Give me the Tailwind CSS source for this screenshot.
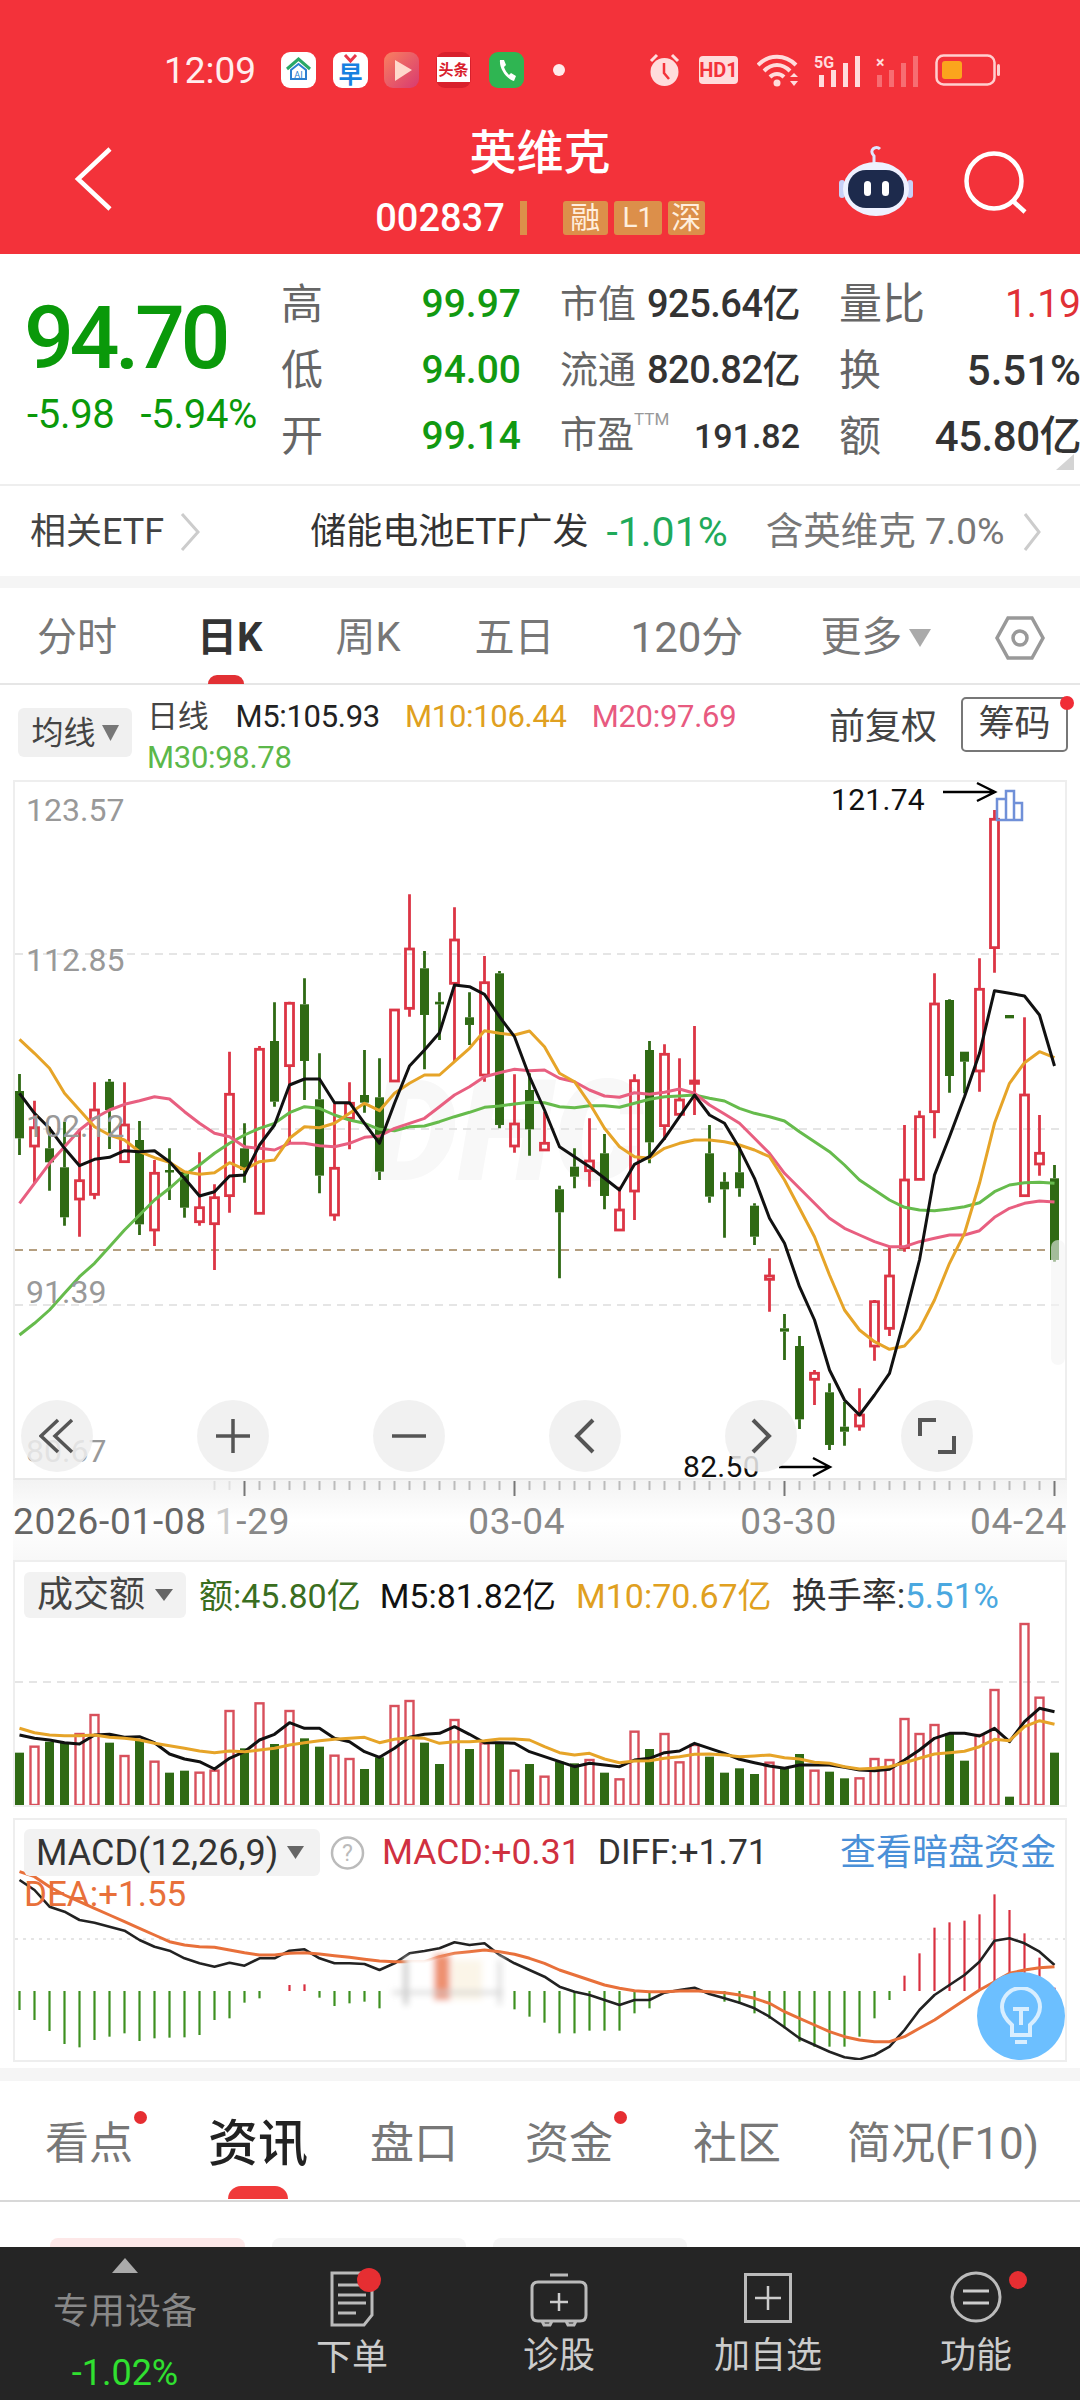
<!DOCTYPE html>
<html lang="zh">
<head>
<meta charset="UTF-8" />
<title>英维克 K线</title>
<script src="https://cdn.jsdelivr.net/npm/@tailwindcss/browser@4"></script>
</head>
<body class="bg-white">
<div class="w-[1080px] h-[2400px] overflow-hidden flex flex-col font-['Roboto','Noto_Sans_CJK_SC',sans-serif] text-[#333]">

  <!-- red header -->
  <header class="bg-[#f3323a] h-[254px] shrink-0 text-white">
    <div class="pt-[52px] pl-[164px] h-[88px] flex items-center">
      <span class="text-[37px] leading-none w-[91px] text-[#ffeeee]">12:09</span>
      <svg class="ml-[26px]" width="35" height="36" viewBox="0 0 35 36"><rect width="35" height="36" rx="9" fill="#fff"/><path d="M6 17 17.5 7 29 17" fill="none" stroke="#2aa866" stroke-width="3"/><path d="M10 18 17.5 12 25 18V27H10Z" fill="none" stroke="#2c7fd0" stroke-width="2"/><text x="17.5" y="26" font-size="9" text-anchor="middle" fill="#2c7fd0">AI</text></svg>
      <svg class="ml-[17px]" width="35" height="36" viewBox="0 0 35 36"><rect width="35" height="36" rx="9" fill="#fff"/><path d="M12 3 17.5 9 23 3" fill="none" stroke="#e8384a" stroke-width="3"/><text x="17.5" y="31" font-size="24" font-weight="700" text-anchor="middle" fill="#1780e0">早</text></svg>
      <svg class="ml-[16px]" width="35" height="36" viewBox="0 0 35 36"><defs><linearGradient id="pg" x1="0" y1="0" x2="1" y2="1"><stop offset="0" stop-color="#f98060"/><stop offset="1" stop-color="#d83a70"/></linearGradient></defs><rect width="35" height="36" rx="9" fill="url(#pg)"/><path d="M11 8 28 18 11 29Z" fill="#ffd8cc"/></svg>
      <svg class="ml-[17px]" width="35" height="36" viewBox="0 0 35 36"><rect width="35" height="36" rx="9" fill="#d8202c"/><rect x="1" y="5" width="33" height="25" fill="#fff"/><text x="17.5" y="23" font-size="15" font-weight="700" text-anchor="middle" fill="#d8202c">头条</text></svg>
      <svg class="ml-[18px]" width="35" height="36" viewBox="0 0 35 36"><rect width="35" height="36" rx="9" fill="#2fb552"/><path d="M11 8C10 16 17 27 25 29L27 24 22 21 20 23C18 21 16 18 15 15L17 13 15 8Z" fill="#fff"/></svg>
      <span class="ml-[29px] w-[12px] h-[12px] rounded-full bg-[#ffeaea]"></span>
      <svg class="ml-[84px]" width="31" height="34" viewBox="0 0 31 34"><path d="M2 8 8 2M29 8 23 2" stroke="#ffdcdc" stroke-width="3"/><circle cx="15.5" cy="19" r="14" fill="#ffdcdc"/><path d="M15 10V20L20 26" fill="none" stroke="#f3323a" stroke-width="2.5"/></svg>
      <span class="ml-[19px] w-[39px] h-[28px] rounded-[4px] bg-[#ffdcdc] text-[#f3323a] text-[20px] leading-[28px] font-bold text-center">HD1</span>
      <svg class="ml-[19px]" width="43" height="34" viewBox="0 0 43 34"><path d="M1 12C12 1 28 1 39 12M7 18C15 10 25 10 33 18M13 24C17 20 23 20 27 24" fill="none" stroke="#ffdcdc" stroke-width="4"/><circle cx="20" cy="30" r="3.5" fill="#ffdcdc"/><path d="M33 24 37 20 41 24ZM33 28H41L37 33Z" fill="#ffdcdc"/></svg>
      <svg class="ml-[14px] overflow-visible" width="48" height="34" viewBox="0 0 48 34"><text x="0" y="15" font-size="16" font-weight="700" fill="#ffdcdc">5G</text><g fill="#ffdcdc"><rect x="5" y="22" width="5" height="12"/><rect x="17" y="17" width="5" height="17"/><rect x="29" y="10" width="5" height="24"/><rect x="41" y="3" width="5" height="31"/></g></svg>
      <svg class="ml-[14px] overflow-visible" width="43" height="34" viewBox="0 0 43 34"><text x="0" y="15" font-size="16" font-weight="700" fill="#ffdcdc">×</text><g fill="#ffdcdc" opacity=".35"><rect x="1" y="22" width="5" height="12"/><rect x="13" y="17" width="5" height="17"/><rect x="25" y="10" width="5" height="24"/><rect x="37" y="3" width="5" height="31"/></g></svg>
      <svg class="ml-[16px]" width="65" height="32" viewBox="0 0 65 32"><rect x="1.5" y="1.5" width="58" height="29" rx="7" fill="none" stroke="#ffcfcf" stroke-width="2.5"/><rect x="7" y="7" width="20" height="18" rx="3" fill="#fba51d"/><rect x="62" y="10" width="3" height="12" rx="1.5" fill="#ffcfcf"/></svg>
    </div>
    <div class="relative h-[166px] pt-[41px] flex flex-col items-center">
      <svg class="absolute left-[74px] top-[58px]" width="40" height="66" viewBox="0 0 40 66"><path d="M36 3 4 33 36 63" fill="none" stroke="#fff" stroke-width="4.5"/></svg>
      <h1 class="text-[47px] leading-none font-medium">英维克</h1>
      <div class="mt-[24px] h-[36px] flex items-center">
        <span class="text-[38px] leading-none font-medium">002837</span>
        <span class="ml-[15px] w-[7px] h-[34px] bg-[#dc8f4a]"></span>
        <span class="ml-[36px] w-[45px] h-[34px] rounded-[3px] bg-[#dc8f4a] text-[#ffeedd] text-[30px] leading-[34px] text-center">融</span>
        <span class="ml-[6px] w-[48px] h-[34px] rounded-[3px] bg-[#dc8f4a] text-[#ffeedd] text-[28px] leading-[34px] text-center">L1</span>
        <span class="ml-[6px] w-[37px] h-[34px] rounded-[3px] bg-[#dc8f4a] text-[#ffeedd] text-[30px] leading-[34px] text-center">深</span>
      </div>
      <svg class="absolute left-[839px] top-[56px]" width="74" height="72" viewBox="0 0 74 72"><path d="M35 22V12C29 6 37 1 41 5" fill="none" stroke="#dfe6ff" stroke-width="3"/><rect x="0" y="36" width="6" height="18" rx="3" fill="#c8d0f6"/><rect x="68" y="36" width="6" height="18" rx="3" fill="#c8d0f6"/><ellipse cx="37" cy="45" rx="33" ry="27" fill="#eef1ff"/><rect x="9" y="26" width="56" height="38" rx="18" fill="#1d2a4c"/><rect x="25" y="37" width="7" height="15" rx="3.5" fill="#fff"/><rect x="43" y="37" width="7" height="15" rx="3.5" fill="#fff"/></svg>
      <svg class="absolute left-[962px] top-[62px]" width="68" height="64" viewBox="0 0 68 64"><circle cx="32" cy="31" r="27.5" fill="none" stroke="#fff" stroke-width="4.5"/><path d="M51 51 63 62" stroke="#fff" stroke-width="4.5"/></svg>
    </div>
  </header>

  <!-- quote -->
  <section class="relative h-[232px] shrink-0 border-b-2 border-[#eeeeee] flex pt-[17px]">
    <div class="pl-[24px] w-[281px] shrink-0">
      <div class="mt-[22px] text-[88px] leading-[90px] font-medium tracking-[-4.5px] text-[#0a990a]">94.70</div>
      <div class="mt-[10px] ml-[3px] flex text-[40px] leading-[44px] tracking-[-0.3px] text-[#0a990a]"><span>-5.98</span><span class="ml-[26px]">-5.94%</span></div>
    </div>
    <div class="grid grid-cols-[240px_240px_242px] auto-rows-[66px] gap-x-[39px] items-center">
      <div class="flex justify-between items-center"><span class="text-[42px] text-[#666]">高</span><span class="text-[39px] font-medium text-[#119911]">99.97</span></div>
      <div class="flex justify-between items-center"><span class="text-[38px] text-[#666]">市值</span><span class="text-[38px] font-medium tracking-[-0.5px]">925.64亿</span></div>
      <div class="flex justify-between items-center"><span class="text-[43px] text-[#666]">量比</span><span class="text-[39px] text-[#e03036]">1.19</span></div>
      <div class="flex justify-between items-center"><span class="text-[42px] text-[#666]">低</span><span class="text-[39px] font-medium text-[#119911]">94.00</span></div>
      <div class="flex justify-between items-center"><span class="text-[38px] text-[#666]">流通</span><span class="text-[38px] font-medium tracking-[-0.5px]">820.82亿</span></div>
      <div class="flex justify-between items-center"><span class="text-[42px] text-[#666]">换</span><span class="text-[42px] font-medium">5.51%</span></div>
      <div class="flex justify-between items-center"><span class="text-[42px] text-[#666]">开</span><span class="text-[39px] font-medium text-[#119911]">99.14</span></div>
      <div class="flex justify-between items-center"><span class="text-[37px] text-[#666] flex items-start">市盈<span class="text-[17px] leading-[22px] text-[#999]">TTM</span></span><span class="text-[34px] font-medium">191.82</span></div>
      <div class="flex justify-between items-center"><span class="text-[42px] text-[#666]">额</span><span class="text-[42px] font-medium tracking-[-0.5px]">45.80亿</span></div>
    </div>
    <svg class="absolute right-[6px] bottom-[14px]" width="18" height="16" viewBox="0 0 18 16"><path d="M18 0V16H0Z" fill="#d4d4d4"/></svg>
  </section>

  <!-- related ETF -->
  <section class="h-[90px] shrink-0 flex items-center pt-[2px] leading-none">
    <span class="ml-[30px] text-[36px] text-[#444]">相关ETF</span>
    <svg class="ml-[16px]" width="21" height="40" viewBox="0 0 21 40"><path d="M2 2 18 20 2 38" fill="none" stroke="#cccccc" stroke-width="3"/></svg>
    <span class="ml-[109px] text-[36px] text-[#333]">储能电池ETF广发</span>
    <span class="ml-[18px] text-[41px] text-[#1faa5a]">-1.01%</span>
    <span class="ml-[38px] text-[37.5px] text-[#777]">含英维克 7.0%</span>
    <svg class="ml-[18px]" width="18" height="40" viewBox="0 0 18 40"><path d="M2 2 16 20 2 38" fill="none" stroke="#cccccc" stroke-width="3"/></svg>
  </section>
  <div class="h-[12px] shrink-0 bg-[#f5f5f5]"></div>

  <!-- period tabs -->
  <nav class="h-[97px] shrink-0 border-b-2 border-[#e6e6e6] pl-[37px] pr-[35px] pt-[4px] flex items-center text-[40px] leading-none text-[#777]">
    <span>分时</span>
    <span class="relative ml-[80px] font-bold text-[#333]">日K<span class="absolute left-[11px] top-[57px] w-[36px] h-[9px] rounded-t-full bg-[#e23034]"></span></span>
    <span class="ml-[73px]">周K</span>
    <span class="ml-[74px]">五日</span>
    <span class="ml-[76px] text-[42px]">120分</span>
    <span class="ml-[77px] flex items-center text-[41px]">更多<svg class="ml-[7px]" width="22" height="18" viewBox="0 0 22 18"><path d="M0 0H22L11 18Z" fill="#aaaaaa"/></svg></span>
    <svg class="ml-auto" width="50" height="46" viewBox="0 0 50 46"><path d="M13 3H37L48 23 37 43H13L2 23Z" fill="none" stroke="#999" stroke-width="3.5"/><circle cx="25" cy="23" r="7" fill="none" stroke="#999" stroke-width="3.5"/></svg>
  </nav>

  <!-- MA legend -->
  <section class="relative h-[95px] shrink-0 flex">
    <div class="ml-[18px] mt-[23px] w-[114px] h-[49px] rounded-[6px] bg-[#f0f0f0] flex items-center justify-center text-[32px] leading-none text-[#444]">均线<svg class="ml-[6px]" width="17" height="16" viewBox="0 0 17 16"><path d="M0 0H17L8.5 16Z" fill="#777"/></svg></div>
    <div class="ml-[15px] mt-[11px] w-[600px] text-[31px] leading-[41px] tracking-[-0.3px]">
      <div class="flex"><span class="text-[#444]">日线</span><span class="ml-[27px] text-[#222]">M5:105.93</span><span class="ml-[25px] text-[#e0a020]">M10:106.44</span><span class="ml-[25px] text-[#e85a80]">M20:97.69</span></div>
      <div class="text-[#5cb84a]">M30:98.78</div>
    </div>
    <span class="absolute left-[829px] top-[22px] text-[36px] leading-[40px] text-[#444]">前复权</span>
    <span class="absolute left-[961px] top-[12px] w-[107px] h-[55px] border-2 border-[#777] rounded-[5px] text-[36px] leading-[51px] text-center text-[#444]">筹码</span>
    <span class="absolute left-[1060px] top-[11px] w-[14px] h-[14px] rounded-full bg-[#f02c36]"></span>
  </section>

  <!-- candle chart -->
  <div class="relative mx-[13px] h-[700px] shrink-0 border-2 border-[#eeeeee] border-b-[#e8e8e8]">
    <svg id="kline" class="block w-full h-full overflow-visible" viewBox="15 782 1050 696">
      <text x="370" y="1180" font-size="140" font-weight="900" font-style="italic" fill="#f8f8f8">DHC</text>
      <g stroke="#dddddd" stroke-width="1.5" stroke-dasharray="8 6"><path d="M15 954H1065M15 1129H1065M15 1305H1065"/></g>
      <path d="M15 1250H1065" stroke="#b59f80" stroke-width="2" stroke-dasharray="8 6"/>
    </svg>
    <div class="absolute left-[6px] top-[618px] flex gap-[104px]">
      <div class="w-[72px] h-[72px] rounded-full bg-[#eeeeee]/85 flex items-center justify-center"><svg width="36" height="36" viewBox="0 0 36 36"><path d="M19 2 2 18 19 34M33 2 16 18 33 34" fill="none" stroke="#555" stroke-width="3.5"/></svg></div>
      <div class="w-[72px] h-[72px] rounded-full bg-[#eeeeee]/85 flex items-center justify-center"><svg width="34" height="34" viewBox="0 0 34 34"><path d="M0 17H34M17 0V34" stroke="#555" stroke-width="3.5"/></svg></div>
      <div class="w-[72px] h-[72px] rounded-full bg-[#eeeeee]/85 flex items-center justify-center"><svg width="34" height="6" viewBox="0 0 34 6"><path d="M0 3H34" stroke="#555" stroke-width="3.5"/></svg></div>
      <div class="w-[72px] h-[72px] rounded-full bg-[#eeeeee]/85 flex items-center justify-center"><svg width="22" height="36" viewBox="0 0 22 36"><path d="M19 2 3 18 19 34" fill="none" stroke="#555" stroke-width="4"/></svg></div>
      <div class="w-[72px] h-[72px] rounded-full bg-[#eeeeee]/85 flex items-center justify-center"><svg width="22" height="36" viewBox="0 0 22 36"><path d="M3 2 19 18 3 34" fill="none" stroke="#555" stroke-width="4"/></svg></div>
      <div class="w-[72px] h-[72px] rounded-full bg-[#eeeeee]/85 flex items-center justify-center"><svg width="38" height="36" viewBox="0 0 38 36"><path d="M2 18V2H18M36 18V34H20" fill="none" stroke="#555" stroke-width="4"/></svg></div>
    </div>
    <div class="absolute right-0 top-[458px] w-[14px] h-[125px] rounded-full bg-[#f4f4f4]/60"></div>
  </div>

  <!-- date axis -->
  <div class="relative h-[80px] shrink-0 mx-[13px] bg-linear-to-b from-[#f3f3f3] via-white via-50% to-[#f8f8f8]">
    <svg id="ticks" class="absolute left-0 top-0" width="1054" height="20" viewBox="13 1480 1054 20"></svg>
    <div class="absolute inset-x-0 top-[21px] h-[40px] flex items-center text-[37px] leading-none tracking-[0.7px] text-[#888]">
      <span class="text-[#666]">2026-01-08</span>
      <span class="ml-[8px]"><span class="text-[#ccc]">1</span>-29</span>
      <span class="ml-[178px]">03-04</span>
      <span class="ml-[175px]">03-30</span>
      <span class="ml-auto">04-24</span>
    </div>
  </div>

  <!-- turnover -->
  <div class="relative mx-[13px] h-[247px] shrink-0 border-2 border-[#eeeeee] overflow-hidden">
    <svg id="vol" class="block w-full h-full" viewBox="15 1562 1050 243">
      <path d="M15 1682H1065" stroke="#dddddd" stroke-width="1.5" stroke-dasharray="8 6"/>
    </svg>
    <div class="absolute left-[9px] top-[10px] flex items-center text-[34px] leading-none">
      <div class="w-[162px] h-[46px] rounded-[6px] bg-[#f2f2f2] flex items-center justify-center text-[36px] text-[#444]">成交额<svg class="ml-[10px]" width="18" height="12" viewBox="0 0 18 12"><path d="M0 0H18L9 12Z" fill="#666"/></svg></div>
      <span class="ml-[13px] pt-[2px] text-[#3a6e20]">额:45.80亿</span>
      <span class="ml-[19px] pt-[2px] text-[#111]">M5:81.82亿</span>
      <span class="ml-[20px] pt-[2px] text-[#e0a020]">M10:70.67亿</span>
      <span class="ml-[20px] pt-[2px] text-[35px] text-[#333]">换手率:<span class="text-[#4aa8e0]">5.51%</span></span>
    </div>
  </div>
  <div class="h-[11px] shrink-0"></div>

  <!-- MACD -->
  <div class="relative mx-[13px] h-[244px] shrink-0 border-2 border-[#eeeeee] overflow-hidden">
    <svg id="macd" class="block w-full h-full" viewBox="15 1820 1050 240">
      <defs><filter id="soft"><feGaussianBlur stdDeviation="3"/></filter></defs>
      <path d="M15 1939H1065" stroke="#dddddd" stroke-width="1.5" stroke-dasharray="3 5"/>
    </svg>
    <div class="absolute left-[9px] top-[9px] flex items-center text-[35.5px] leading-none">
      <div class="w-[296px] h-[47px] rounded-[6px] bg-[#f2f2f2] flex items-center pl-[12px] text-[36px] text-[#333]">MACD(12,26,9)<svg class="ml-[9px]" width="17" height="13" viewBox="0 0 17 13"><path d="M0 0H17L8.5 13Z" fill="#666"/></svg></div>
      <svg class="ml-[10px]" width="35" height="36" viewBox="0 0 35 36"><circle cx="17.5" cy="18" r="15.5" fill="none" stroke="#bbbbbb" stroke-width="2.5"/><text x="17.5" y="26" font-size="23" text-anchor="middle" fill="#bbbbbb">?</text></svg>
      <span class="ml-[17px] text-[#d03040]">MACD:+0.31</span>
      <span class="ml-[17px] text-[#333]">DIFF:+1.71</span>
      <span class="absolute left-[816px] w-[216px] text-[36px] text-[#4a90d8] whitespace-nowrap">查看暗盘资金</span>
    </div>
    <span class="absolute left-[9px] top-[55px] text-[35px] leading-[40px] text-[#e8703a]">DEA:+1.55</span>
    <div class="absolute left-[962px] top-[152px] w-[88px] h-[88px] rounded-full bg-[#6cbfff] flex items-center justify-center">
      <svg width="42" height="58" viewBox="0 0 42 58"><path d="M12 38C4 31 2 25 2 20A19 19 0 0 1 40 20C40 25 38 31 30 38V48H12Z" fill="none" stroke="#d8eeff" stroke-width="4"/><path d="M13 22H29M21 22V38M15 55H27" fill="none" stroke="#d8eeff" stroke-width="4"/></svg>
    </div>
  </div>
  <div class="h-[6px] shrink-0"></div>
  <div class="h-[13px] shrink-0 bg-[#f5f5f5]"></div>

  <!-- lower tabs -->
  <nav class="relative h-[121px] shrink-0 border-b-2 border-[#d8d8d8] pl-[45px] pt-[6px] flex items-center text-[44px] leading-none text-[#777]">
    <span class="relative">看点<span class="absolute -right-[14px] -top-[11px] w-[13px] h-[13px] rounded-full bg-[#e62e32]"></span></span>
    <span class="relative ml-[75px] text-[50px] font-medium text-[#222]">资讯<span class="absolute left-[20px] top-[67px] w-[60px] h-[13px] rounded-t-full rounded-b-[3px] bg-[#f03a3a]"></span></span>
    <span class="ml-[62px]">盘口</span>
    <span class="relative ml-[67px]">资金<span class="absolute -right-[14px] -top-[11px] w-[13px] h-[13px] rounded-full bg-[#e62e32]"></span></span>
    <span class="ml-[80px]">社区</span>
    <span class="ml-[66px]">简况(F10)</span>
  </nav>
  <div class="h-[45px] shrink-0 flex items-end pl-[50px] gap-[27px]">
    <div class="w-[195px] h-[9px] rounded-t-[8px] bg-[#fde8e8]"></div>
    <div class="w-[194px] h-[9px] rounded-t-[8px] bg-[#f5f5f5]"></div>
    <div class="w-[194px] h-[9px] rounded-t-[8px] bg-[#f5f5f5]"></div>
  </div>

  <!-- bottom bar -->
  <footer class="h-[153px] shrink-0 bg-[#252525] grid grid-cols-[250px_204px_210px_208px_208px] text-[36px] leading-none text-[#cccccc]">
    <div class="flex flex-col items-center pt-[11px]">
      <svg width="26" height="15" viewBox="0 0 26 15"><path d="M13 0 26 15H0Z" fill="#aaaaaa"/></svg>
      <span class="mt-[21px] text-[#888]">专用设备</span>
      <span class="mt-[25px] text-[36px] text-[#30e030]">-1.02%</span>
    </div>
    <div class="relative flex flex-col items-center pt-[24px]">
      <svg width="52" height="56" viewBox="0 0 52 56"><path d="M6 2H46V44L38 54H6Z" fill="none" stroke="#bbbbbb" stroke-width="3"/><path d="M12 14H36M12 24H40M12 32H40M12 42H30" stroke="#bbbbbb" stroke-width="3"/></svg>
      <span class="mt-[13px]">下单</span>
      <span class="absolute left-[107px] top-[21px] w-[24px] h-[24px] rounded-full bg-[#e62e32]"></span>
    </div>
    <div class="flex flex-col items-center pt-[26px]">
      <svg width="58" height="54" viewBox="0 0 58 54"><path d="M20 2H38M8 9H50Q56 9 56 15V42Q56 48 50 48H8Q2 48 2 42V15Q2 9 8 9ZM12 48 14 52H20L22 48M36 48 38 52H44L46 48" fill="none" stroke="#bbbbbb" stroke-width="3"/><path d="M29 20V38M20 29H38" stroke="#cccccc" stroke-width="2.5"/></svg>
      <span class="mt-[11px]">诊股</span>
    </div>
    <div class="flex flex-col items-center pt-[26px]">
      <svg width="48" height="50" viewBox="0 0 48 50"><rect x="1.5" y="1.5" width="45" height="47" fill="none" stroke="#bbbbbb" stroke-width="3"/><path d="M24 13V37M11 25H37" stroke="#cccccc" stroke-width="2.5"/></svg>
      <span class="mt-[15px]">加自选</span>
    </div>
    <div class="relative flex flex-col items-center pt-[24px]">
      <svg width="52" height="52" viewBox="0 0 52 52"><circle cx="26" cy="26" r="24" fill="none" stroke="#bbbbbb" stroke-width="3"/><path d="M13 20H39M13 32H39" stroke="#cccccc" stroke-width="3"/></svg>
      <span class="mt-[15px]">功能</span>
      <span class="absolute left-[137px] top-[24px] w-[18px] h-[18px] rounded-full bg-[#e62e32]"></span>
    </div>
  </footer>
</div>

<script>
  const RED = '#dc3545', GREEN = '#2f6a14';
  const xAt = i => 19.5 + 15 * i;

  // hi, bodyTop, bodyBottom, lo, measured in 1/3px from y=760
  const candles = [
    ['g',942,993,1135,1185],['r',1022,1103,1158,1270],['g',1100,1165,1207,1292],['g',1085,1222,1372,1397],['r',1108,1262,1317,1430],
    ['r',967,1050,1303,1318],['g',957,965,1050,1167],['r',967,1095,1205,1205],['g',1083,1140,1393,1425],['r',1200,1240,1410,1458],
    ['g',1165,1230,1236,1320],['g',1235,1235,1343,1373],['r',1177,1343,1385,1397],['r',1273,1313,1391,1530],['r',875,1003,1307,1358],
    ['g',1090,1165,1230,1268],['r',858,868,1360,1360],['g',727,843,1025,1040],['r',725,730,917,1150],['g',655,733,903,1020],
    ['g',880,1018,1247,1300],['r',1030,1225,1365,1382],['r',967,1030,1075,1168],['g',870,1005,1028,1058],['g',895,1012,1235,1260],
    ['r',750,750,963,963],['r',403,567,745,770],['g',573,625,765,928],['g',697,725,733,840],['r',442,540,670,905],
    ['g',697,772,795,855],['r',588,668,945,965],['g',633,640,1095,1105],['r',943,1092,1158,1178],['g',940,990,1108,1187],
    ['r',1055,1150,1170,1170],['g',1277,1288,1357,1555],['g',1165,1220,1250,1285],['r',1075,1203,1232,1280],['g',1122,1180,1308,1348],
    ['r',1280,1350,1410,1410],['r',943,962,1293,1380],['g',843,870,1147,1210],['r',853,883,1097,1140],['r',895,1020,1063,1063],
    ['r',798,963,970,1065],['g',1095,1180,1310,1328],['g',1237,1265,1288,1433],['g',1160,1237,1285,1310],['g',1330,1337,1430,1455],
    ['r',1495,1548,1558,1655],['g',1662,1705,1715,1800],['g',1728,1758,1978,2007],['r',1830,1840,1858,1935],['g',1870,1897,2055,2070],
    ['g',1925,2000,2015,2057],['r',1885,1965,1998,2012],['r',1620,1625,1758,1802],['r',1460,1548,1705,1728],['r',1095,1260,1463,1475],
    ['r',1052,1070,1258,1258],['r',640,732,1055,1135],['g',718,720,948,998],['g',875,875,905,1000],['r',595,688,933,995],
    ['r',150,178,563,638],['g',765,765,775,775],['r',772,1005,1307,1307],['r',1065,1180,1212,1247],['g',1215,1255,1500,1505]
  ];
  const ma5 = [1000,1060,1105,1165,1217,1198,1192,1172,1175,1172,1205,1255,1308,1295,1248,1245,1155,1095,975,957,957,1028,1028,1090,1150,1030,918,870,818,675,680,703,770,830,950,1050,1160,1190,1220,1255,1290,1213,1190,1135,1070,1005,1065,1090,1165,1255,1375,1450,1580,1680,1830,1920,1965,1905,1840,1675,1500,1245,1130,1010,880,692,700,708,765,918];
  const ma10 = [838,880,925,1000,1050,1100,1125,1140,1175,1193,1207,1235,1243,1238,1208,1228,1205,1200,1135,1100,1103,1090,1060,1030,1052,1000,970,945,945,905,865,812,820,825,813,860,940,965,1030,1105,1160,1190,1195,1165,1150,1140,1140,1145,1155,1170,1190,1260,1345,1430,1545,1650,1710,1745,1768,1758,1708,1620,1510,1420,1270,1090,970,908,875,893];
  const ma20 = [1330,1270,1210,1160,1110,1075,1050,1033,1022,1010,1017,1055,1090,1120,1130,1160,1165,1170,1150,1150,1157,1160,1150,1132,1128,1105,1090,1075,1040,1005,980,950,938,928,932,930,955,965,990,1008,1012,998,1003,997,987,1000,1035,1062,1090,1135,1180,1240,1285,1330,1375,1405,1425,1445,1460,1460,1445,1435,1425,1425,1412,1372,1345,1330,1323,1326];
  const ma30 = [1725,1690,1650,1600,1550,1510,1460,1410,1365,1320,1285,1245,1215,1180,1150,1125,1105,1090,1058,1040,1045,1065,1080,1090,1108,1112,1100,1098,1085,1070,1057,1042,1038,1032,1027,1028,1040,1043,1037,1037,1042,1030,1018,1010,1008,1005,1015,1023,1045,1060,1070,1083,1115,1145,1175,1215,1260,1290,1320,1342,1350,1352,1347,1340,1328,1295,1275,1268,1267,1270];

  const line = (pts, top, color, w) => `<polyline points="${pts.map((v, i) => xAt(i) + ',' + (top + v / 3).toFixed(1)).join(' ')}" fill="none" stroke="${color}" stroke-width="${w}" stroke-linejoin="round"/>`;

  function drawKline() {
    const y = v => (760 + v / 3).toFixed(1);
    let s = '';
    candles.forEach(([c, hi, a, b, lo], i) => {
      const x = xAt(i), col = c === 'r' ? RED : GREEN;
      s += `<path d="M${x} ${y(hi)}V${y(a)}M${x} ${y(b)}V${y(lo)}" stroke="${col}" stroke-width="2.8"/>`;
      if (c === 'r') s += `<rect x="${x - 4}" y="${y(a)}" width="8" height="${Math.max((b - a) / 3, 2)}" fill="none" stroke="${col}" stroke-width="2.8"/>`;
      else s += `<rect x="${x - 4.5}" y="${y(a)}" width="9" height="${Math.max((b - a) / 3, 2.5)}" fill="${col}"/>`;
    });
    s += line(ma30, 760, '#66bb4c', 3) + line(ma20, 760, '#e85f80', 3) + line(ma10, 760, '#e6a428', 3) + line(ma5, 760, '#111', 3);
    [['123.57', 821], ['112.85', 971], ['102.12', 1137], ['91.39', 1303], ['80.67', 1462]].forEach(([t, by]) => {
      s += `<text x="26" y="${by}" font-size="32" fill="#999">${t}</text>`;
    });
    s += `<text x="831" y="810" font-size="30" letter-spacing="0.3" fill="#111">121.74</text>`;
    s += `<path d="M943 792H995M977 783 995 792 977 801" fill="none" stroke="#000" stroke-width="2.4"/>`;
    s += `<path d="M997 820V799H1006V791H1014V803H1022V820ZM1006 799V820M1014 803V820" fill="none" stroke="#7090d8" stroke-width="2.5"/>`;
    s += `<text x="683" y="1477" font-size="30" letter-spacing="0.3" fill="#111">82.50</text>`;
    s += `<path d="M779 1467H830M813 1458 830 1467 813 1476" fill="none" stroke="#000" stroke-width="2.4"/>`;
    document.getElementById('kline').insertAdjacentHTML('beforeend', s);
  }

  function drawTicks() {
    let s = '';
    for (let i = 13; i < 70; i++) {
      const major = (i - 15) % 18 === 0;
      const op = i < 15 ? 0.35 : 1;
      s += `<path d="M${xAt(i)} 1481V${major ? 1496 : 1490}" stroke="${major ? '#777' : '#bbb'}" stroke-width="2" opacity="${op}"/>`;
    }
    document.getElementById('ticks').innerHTML = s;
  }

  const volumes = [
    ['g',608],['r',590],['g',575],['g',578],['r',552],['r',495],['g',578],['r',618],['g',572],['r',635],['g',668],['g',662],['r',668],['r',662],
    ['r',483],['g',595],['r',460],['g',582],['r',483],['g',565],['g',590],['r',617],['r',627],['g',657],['g',622],['r',468],['r',453],['g',578],
    ['g',642],['r',510],['g',597],['r',580],['g',580],['r',662],['g',642],['r',680],['g',635],['g',640],['r',630],['g',668],['r',688],['r',545],
    ['g',597],['r',552],['r',637],['r',585],['g',620],['g',668],['g',655],['g',672],['r',638],['g',655],['g',612],['r',662],['g',665],['g',685],
    ['r',685],['r',627],['r',630],['r',507],['r',552],['r',525],['g',550],['g',632],['r',555],['r',420],['g',740],['r',222],['r',443],['g',608]
  ];
  const volMa5 = [555,565,570,578,582,555,553,562,560,578,612,627,635,657,625,605,570,553,518,535,535,565,575,605,622,595,562,553,550,530,553,578,578,580,605,620,635,650,640,645,650,630,625,608,603,580,595,610,628,638,648,655,645,645,645,652,660,662,658,630,600,565,550,550,558,535,575,515,475,485];
  const volMa10 = [535,548,555,557,557,555,562,565,570,580,587,595,603,608,603,605,600,595,585,578,572,568,565,562,578,568,563,565,580,575,575,572,567,567,570,590,608,615,610,627,638,633,632,625,620,613,612,615,620,618,615,623,627,637,640,650,657,655,650,638,625,612,608,604,590,568,572,530,512,523];

  function drawVolume() {
    const base = 1805;
    let s = '';
    volumes.forEach(([c, top], i) => {
      const x = xAt(i), yt = 1550 + top / 3;
      if (c === 'r') s += `<rect x="${x - 4}" y="${yt}" width="8" height="${base - yt}" fill="none" stroke="#d8505c" stroke-width="2.4"/>`;
      else s += `<rect x="${x - 4.5}" y="${yt}" width="9" height="${base - yt}" fill="${GREEN}"/>`;
    });
    s += line(volMa5, 1550, '#111', 3) + line(volMa10, 1550, '#e6a428', 3);
    document.getElementById('vol').insertAdjacentHTML('beforeend', s);
  }

  // bar tips, 1/3px from y=1820; baseline is 513. null = covered in the screenshot
  const bars = [570,600,633,672,682,660,650,640,663,655,653,652,645,600,595,548,535,513,495,493,533,558,550,545,565,null,null,null,null,null,null,null,null,568,590,608,640,640,632,632,632,580,565,513,515,515,525,545,552,580,596,625,665,680,680,680,650,595,540,467,400,323,307,302,283,223,270,340,413,503];
  const diff = [180,210,260,275,300,308,320,332,360,380,392,415,430,440,428,437,415,415,392,388,415,430,430,432,450,430,400,393,385,367,375,370,405,430,450,470,500,515,525,540,555,540,540,518,510,503,522,535,548,565,590,622,655,675,695,712,718,705,680,630,570,525,495,465,425,362,355,370,395,435];
  const dea = [155,170,200,225,245,265,285,305,325,345,365,375,380,382,390,398,405,405,400,398,402,407,412,418,423,425,425,425,410,400,395,390,395,403,415,430,450,465,480,495,505,512,515,515,513,512,515,518,525,535,550,575,595,615,635,650,660,665,665,650,625,600,570,540,510,485,460,450,443,440];

  function drawMacd() {
    const base = 1820 + 513 / 3;
    let s = '';
    bars.forEach((tip, i) => {
      if (tip === null) return;
      const y = 1820 + tip / 3, x = xAt(i);
      s += `<path d="M${x} ${base}V${y}" stroke="${tip < 513 ? '#d83040' : '#3d9020'}" stroke-width="2.2"/>`;
    });
    s += line(diff, 1820, '#222', 2.6) + line(dea, 1820, '#e8703a', 3);
    s += `<g filter="url(#soft)"><rect x="404" y="1957" width="100" height="60" fill="#fff"/><rect x="404" y="1960" width="4" height="45" fill="#bbb"/><rect x="434" y="1955" width="16" height="45" fill="#ee9070"/><rect x="452" y="1960" width="30" height="40" fill="#fbf5e8"/><rect x="498" y="1960" width="3" height="45" fill="#ccc"/><rect x="393" y="1991" width="110" height="3" fill="#ccc"/></g>`;
    document.getElementById('macd').insertAdjacentHTML('beforeend', s);
  }

  drawKline();
  drawTicks();
  drawVolume();
  drawMacd();
</script>
</body>
</html>
